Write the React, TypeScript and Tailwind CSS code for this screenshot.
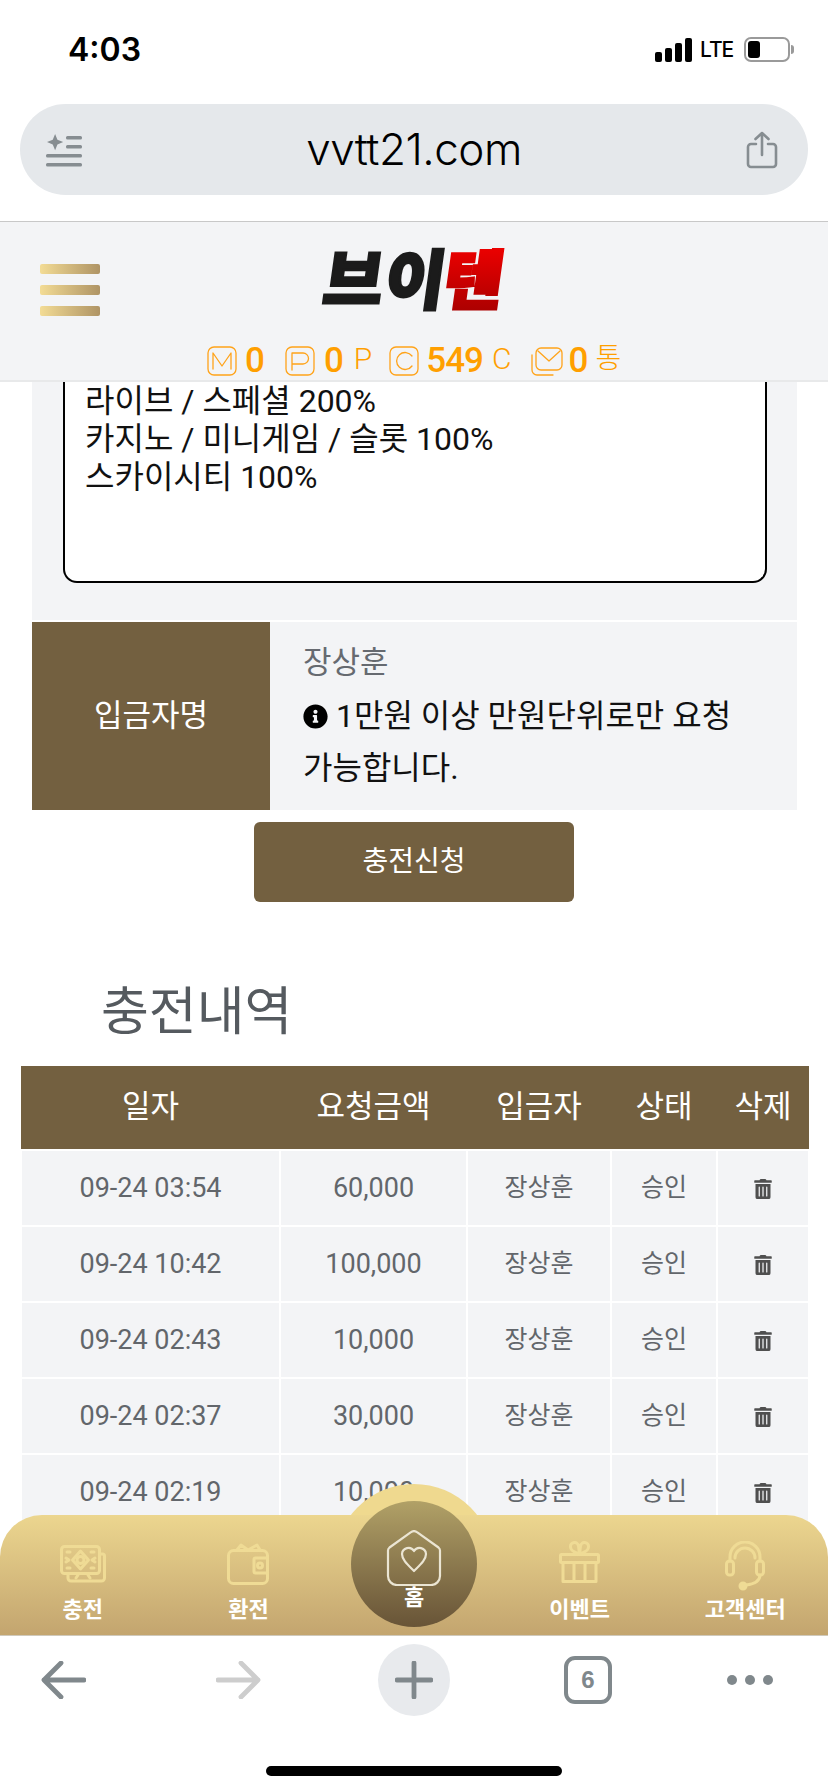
import { FaInfoCircle, FaTrashAlt } from "react-icons/fa";

const rows = [
  { date: "09-24 03:54", amount: "60,000" },
  { date: "09-24 10:42", amount: "100,000" },
  { date: "09-24 02:43", amount: "10,000" },
  { date: "09-24 02:37", amount: "30,000" },
  { date: "09-24 02:19", amount: "10,000" },
];

function StatusBar() {
  return (
    <div className="h-[104px] flex items-start justify-between pt-[31px] pl-[68px] pr-[34px]">
      <span className="font-['Inter',sans-serif] font-semibold text-[32px] leading-[38px] text-black">4:03</span>
      <div className="flex items-center mt-[6px]">
        <div className="flex items-end gap-[3px] h-[24px]">
          <i className="block w-[7px] h-[10px] rounded-[2px] bg-black" />
          <i className="block w-[7px] h-[14px] rounded-[2px] bg-black" />
          <i className="block w-[7px] h-[19px] rounded-[2px] bg-black" />
          <i className="block w-[7px] h-[24px] rounded-[2px] bg-black" />
        </div>
        <span className="ml-[8px] w-[36px] font-['Inter',sans-serif] font-medium text-[21px] leading-[24px] tracking-[-1px] text-black">LTE</span>
        <div className="ml-[8px] w-[46px] h-[25px] rounded-[7px] border-2 border-[#9a9a9a] p-[2px]">
          <div className="w-[12px] h-full rounded-[3px] bg-black" />
        </div>
        <div className="ml-[1px] w-[3px] h-[9px] rounded-r-[3px] bg-[#9a9a9a]" />
      </div>
    </div>
  );
}

function UrlBar() {
  return (
    <div className="h-[117px] px-[20px]">
      <div className="h-[91px] rounded-[46px] bg-[#e5e8eb] flex items-center justify-between pl-[26px] pr-[30px]">
        <svg width="36" height="34" viewBox="0 0 36 34" fill="#868d91">
          <path d="M9 0l2.6 6.4L18 9l-6.4 2.6L9 18l-2.6-6.4L0 9l6.400-2.600z" transform="translate(1 1) scale(.9)" />
          <rect x="20" y="3" width="16" height="3.500" rx="1.500" />
          <rect x="20" y="12" width="16" height="3.500" rx="1.500" />
          <rect x="0" y="21" width="36" height="3.500" rx="1.500" />
          <rect x="0" y="30" width="36" height="3.500" rx="1.500" />
        </svg>
        <span className="font-['Inter',sans-serif] font-light text-[44px] leading-[50px] tracking-[-0.5px] text-black -mt-[2px]">vvtt21.com</span>
        <svg width="32" height="38" viewBox="0 0 32 38" fill="none" stroke="#868d91" strokeWidth="2.600" strokeLinecap="round" strokeLinejoin="round">
          <path d="M10 13H5a3 3 0 0 0-3 3v17a3 3 0 0 0 3 3h22a3 3 0 0 0 3-3V16a3 3 0 0 0-3-3h-5" />
          <path d="M16 24V2M9.500 8L16 2l6.500 6" />
        </svg>
      </div>
    </div>
  );
}

function BoxIcon({ letter }: { letter: "M" | "P" | "C" }) {
  return (
    <svg width="30" height="30" viewBox="0 0 30 30" fill="none" stroke="#ffa319" strokeWidth="1.300" strokeLinejoin="round" strokeLinecap="round">
      <rect x="1" y="1" width="28" height="28" rx="6" />
      {letter === "M" && <path d="M6 23V7l9 13 9-13v16" />}
      {letter === "P" && <path d="M7 24V7h11a5.500 5.500 0 0 1 0 11H7" />}
      {letter === "C" && <path d="M23 10a8.500 8.500 0 1 0 0 10" />}
    </svg>
  );
}

function MailIcon() {
  return (
    <svg width="32" height="30" viewBox="0 0 32 30" fill="none" stroke="#ffa319" strokeWidth="1.300" strokeLinejoin="round" strokeLinecap="round">
      <rect x="5" y="2" width="26" height="22" rx="5" />
      <path d="M7 5l11 10L29 5" />
      <path d="M1 9v15a5 5 0 0 0 5 5h16" />
    </svg>
  );
}

function Logo() {
  return (
    <svg className="-ml-[42px] -mt-[26px]" width="190" height="104" viewBox="0 0 190 104" fontFamily="'Noto Sans CJK KR', sans-serif" fontWeight="900" fontSize="65" strokeLinejoin="miter">
      <defs>
        <linearGradient id="logoRed" x1="0" y1="0" x2="0" y2="1">
          <stop offset="0" stopColor="#ff0000" />
          <stop offset="1" stopColor="#a00000" />
        </linearGradient>
      </defs>
      <g transform="skewX(-8)">
        <text x="14" y="80" fill="#1b1b1b" stroke="#1b1b1b" strokeWidth="2.500" letterSpacing="2">브이</text>
        <text x="134" y="80" fill="url(#logoRed)" stroke="url(#logoRed)" strokeWidth="2.500">텐</text>
      </g>
    </svg>
  );
}

function Header() {
  const count = "text-[35px] leading-[30px] font-medium tracking-[-1px]";
  const unit = "text-[30px] leading-[30px] font-light -mt-[4px]";
  return (
    <header className="h-[161px] border-t border-[#c8c8c8] bg-[#f3f4f6] border-b-2 border-b-[#e8e9ea] shrink-0">
      <div className="grid grid-cols-[1fr_auto_1fr] items-start pt-[28px] pl-[40px] h-[123px]">
        <div className="mt-[14px] flex flex-col gap-[11px]">
          <i className="block w-[60px] h-[10px] rounded-[2px] bg-linear-to-r from-[#f3dc95] to-[#af9465]" />
          <i className="block w-[60px] h-[10px] rounded-[2px] bg-linear-to-r from-[#f3dc95] to-[#af9465]" />
          <i className="block w-[60px] h-[10px] rounded-[2px] bg-linear-to-r from-[#f3dc95] to-[#af9465]" />
        </div>
        <Logo />
      </div>
      <div className="flex items-center pl-[207px] text-[#ff9f00] h-[30px] mt-[1px]">
        <BoxIcon letter="M" />
        <span className={`ml-[8px] ${count}`}>0</span>
        <div className="ml-[21px]"><BoxIcon letter="P" /></div>
        <span className={`ml-[9px] ${count}`}>0</span>
        <span className={`ml-[11px] ${unit}`}>P</span>
        <div className="ml-[17px]"><BoxIcon letter="C" /></div>
        <span className={`ml-[7px] ${count}`}>549</span>
        <span className={`ml-[9px] ${unit}`}>C</span>
        <div className="ml-[20px]"><MailIcon /></div>
        <span className={`ml-[5px] ${count}`}>0</span>
        <span className="ml-[8px] text-[28px] leading-[30px] font-light -mt-[4px]">통</span>
      </div>
    </header>
  );
}

function MoneyIcon() {
  return (
    <svg className="blur-[0.6px]" width="46" height="38" viewBox="0 0 46 38" fill="none" stroke="#efdb95" strokeWidth="3" strokeLinejoin="round" strokeLinecap="round">
      <rect x="1.500" y="1.500" width="38" height="27" rx="3" />
      <path d="M40 9h2.500a2 2 0 0 1 2 2v22a3 3 0 0 1-3 3H11a3 3 0 0 1-3-3v-4" />
      <path d="M20.500 6l8 9-8 9-8-9z" />
      <circle cx="20.500" cy="15" r="3.500" />
      <path d="M7 7h3M31 7h3M7 23h3M31 23h3M6 13l3 2-3 2M35 13l-3 2 3 2M16 33l2-3M30 33l-2-3" />
    </svg>
  );
}

function WalletIcon() {
  return (
    <svg className="blur-[0.6px]" width="42" height="42" viewBox="0 0 42 42" fill="none" stroke="#efdb95" strokeWidth="3" strokeLinejoin="round" strokeLinecap="round">
      <rect x="1.500" y="7.500" width="39" height="33" rx="5" />
      <path d="M10 7l4-5 7 5 9-5 3 5" />
      <rect x="27" y="15" width="13.500" height="15" rx="1.500" />
      <circle cx="33" cy="22.500" r="2.500" />
    </svg>
  );
}

function GiftIcon() {
  return (
    <svg className="blur-[0.6px]" width="41" height="42" viewBox="0 0 41 42" fill="none" stroke="#efdb95" strokeWidth="3" strokeLinejoin="round" strokeLinecap="round">
      <rect x="1.500" y="13.500" width="38" height="8" rx="1" />
      <path d="M4 21.500V40.500H37V21.500M15 21.500V40.500M26 21.500V40.500" />
      <path d="M20.500 13c-2-1-9-2-9-7a4 4 0 0 1 8-1zM20.500 13c2-1 9-2 9-7a4 4 0 0 0-8-1z" />
    </svg>
  );
}

function HeadsetIcon() {
  return (
    <svg className="blur-[0.6px]" width="40" height="50" viewBox="0 0 40 50" fill="none" stroke="#efdb95" strokeWidth="3" strokeLinejoin="round" strokeLinecap="round">
      <path d="M5 20V16a15 15 0 0 1 30 0v4" />
      <path d="M10 17a10 10 0 0 1 20 0" />
      <rect x="1.500" y="20" width="7" height="14" rx="3" />
      <rect x="31.500" y="20" width="7" height="14" rx="3" />
      <path d="M35 34c0 6-6 9-14 10" />
      <circle cx="18" cy="45" r="3" fill="#efdb95" />
    </svg>
  );
}

function HomeIcon() {
  return (
    <svg width="58" height="56" viewBox="0 0 58 56" fill="none" stroke="#ebe5d3" strokeWidth="2.200" strokeLinejoin="round" strokeLinecap="round">
      <path d="M3 20.500a4 4 0 0 1 1.500-3L26 2.200a5 5 0 0 1 6 0l21.500 15.300a4 4 0 0 1 1.500 3V46a9 9 0 0 1-9 9H12a9 9 0 0 1-9-9z" />
      <path d="M29 41C23 35 17 30 17 24a6.500 6.500 0 0 1 12-3 6.500 6.500 0 0 1 12 3c0 6-6 11-12 17z" />
    </svg>
  );
}

function BottomNav() {
  const label = "font-bold text-[22px] leading-[28px] text-white whitespace-nowrap";
  return (
    <nav className="absolute left-0 right-0 bottom-0 h-[121px]">
      {/* raised circle behind the bar */}
      <div className="absolute left-[334px] -top-[31px] w-[160px] h-[160px] rounded-full bg-[#efd98f]" />
      <div className="relative h-full rounded-t-[42px] bg-linear-to-b from-[#ecd68f] to-[#c3a56f] grid grid-cols-5 border-b border-[#cfc9bb]">
        <div className="flex flex-col items-center">
          <div className="h-[81px] pt-[30px]"><MoneyIcon /></div>
          <span className={label}>충전</span>
        </div>
        <div className="flex flex-col items-center">
          <div className="h-[81px] pt-[28px]"><WalletIcon /></div>
          <span className={label}>환전</span>
        </div>
        <div />
        <div className="flex flex-col items-center">
          <div className="h-[81px] pt-[26px]"><GiftIcon /></div>
          <span className={label}>이벤트</span>
        </div>
        <div className="flex flex-col items-center">
          <div className="h-[81px] pt-[26px]"><HeadsetIcon /></div>
          <span className={label}>고객센터</span>
        </div>
      </div>
      <div className="absolute left-[351px] -top-[14px] w-[126px] h-[126px] rounded-full bg-linear-to-b from-[#b1a167] to-[#685437] flex flex-col items-center pt-[29px]">
        <HomeIcon />
        <span className={`${label} -mt-[2px]`}>홈</span>
      </div>
    </nav>
  );
}

function Toolbar() {
  return (
    <div className="h-[156px] bg-white shrink-0 pt-[8px]">
      <div className="flex items-center h-[72px] pl-[41px]">
        <svg width="45" height="38" viewBox="0 0 45 38" fill="none" stroke="#80888c" strokeWidth="4.800" strokeLinecap="round" strokeLinejoin="round">
          <path d="M43 19H3M20 2L3 19l17 17" />
        </svg>
        <svg className="ml-[130px]" width="45" height="38" viewBox="0 0 45 38" fill="none" stroke="#cdcdcd" strokeWidth="4.800" strokeLinecap="round" strokeLinejoin="round">
          <path d="M2 19h40M25 2l17 17-17 17" />
        </svg>
        <div className="ml-[117px] w-[72px] h-[72px] rounded-full bg-[#e8eaed] flex items-center justify-center">
          <svg width="38" height="38" viewBox="0 0 38 38" fill="none" stroke="#80888c" strokeWidth="4.800" strokeLinecap="round">
            <path d="M19 2v34M2 19h34" />
          </svg>
        </div>
        <div className="ml-[114px] w-[48px] h-[48px] rounded-[11px] border-4 border-[#80888c] flex items-center justify-center font-['Liberation_Sans',sans-serif] font-bold text-[24px] text-[#80888c]">
          6
        </div>
        <div className="ml-[115px] flex gap-[8px]">
          <i className="block w-[10px] h-[10px] rounded-full bg-[#80888c]" />
          <i className="block w-[10px] h-[10px] rounded-full bg-[#80888c]" />
          <i className="block w-[10px] h-[10px] rounded-full bg-[#80888c]" />
        </div>
      </div>
      <div className="mx-auto mt-[50px] w-[296px] h-[10px] rounded-full bg-black" />
    </div>
  );
}

export default function App() {
  return (
    <div className="w-[828px] h-[1792px] flex flex-col overflow-hidden bg-white font-['Roboto','Noto_Sans_CJK_KR',sans-serif]">
      <StatusBar />
      <UrlBar />
      <Header />

      <main className="relative flex-1 overflow-hidden">
        {/* deposit form */}
        <div className="mx-[32px] w-[765px]">
          <div className="h-[238px] bg-[#f3f4f6] pl-[31px] pr-[30px]">
            <div className="h-[201px] bg-white border-x-2 border-b-2 border-black rounded-b-[14px] pl-[20px] text-[32px] leading-[38px] text-[#111]">
              <div>라이브 / 스페셜 200%</div>
              <div>카지노 / 미니게임 / 슬롯 100%</div>
              <div>스카이시티 100%</div>
            </div>
          </div>
          <div className="mt-[2px] flex h-[188px] bg-[#f3f4f6]">
            <div className="w-[238px] bg-[#736040] flex items-center justify-center text-white text-[31px]">입금자명</div>
            <div className="flex-1 pl-[33px] pt-[21px]">
              <div className="text-[#666a70] text-[31px] leading-[40px]">장상훈</div>
              <div className="mt-[7px] text-[32px] leading-[52px] text-[#111] pr-[40px] break-keep">
                <FaInfoCircle className="inline-block mr-[8px] -mt-[4px] text-black" size={25} />
                1만원 이상 만원단위로만 요청 가능합니다.
              </div>
            </div>
          </div>
        </div>

        <button className="block mx-auto mt-[12px] w-[320px] h-[80px] rounded-[6px] bg-[#736040] text-white text-[28px]">
          충전신청
        </button>

        <h2 className="mt-[79px] mb-[21px] pl-[101px] text-[52px] leading-[64px] font-normal text-[#555a5f]">충전내역</h2>

        {/* history table */}
        <table className="ml-[20px] w-[788px] table-fixed border-collapse text-center">
          <colgroup>
            <col className="w-[259px]" />
            <col className="w-[187px]" />
            <col className="w-[144px]" />
            <col className="w-[106px]" />
            <col className="w-[92px]" />
          </colgroup>
          <thead>
            <tr className="h-[84px] bg-[#736040] text-white text-[31px]">
              <th className="font-normal">일자</th>
              <th className="font-normal">요청금액</th>
              <th className="font-normal">입금자</th>
              <th className="font-normal">상태</th>
              <th className="font-normal">삭제</th>
            </tr>
          </thead>
          <tbody className="text-[#62666b] text-[25px]">
            {rows.map((r) => (
              <tr key={r.date} className="h-[76px] bg-[#f3f4f6]">
                <td className="border-2 border-white text-[27px]">{r.date}</td>
                <td className="border-2 border-white text-[27px]">{r.amount}</td>
                <td className="border-2 border-white">장상훈</td>
                <td className="border-2 border-white">승인</td>
                <td className="border-2 border-white">
                  <FaTrashAlt className="inline-block text-[#4f4f4f] -mt-[2px]" size={20} />
                </td>
              </tr>
            ))}
          </tbody>
        </table>

        <BottomNav />
      </main>

      <Toolbar />
    </div>
  );
}
